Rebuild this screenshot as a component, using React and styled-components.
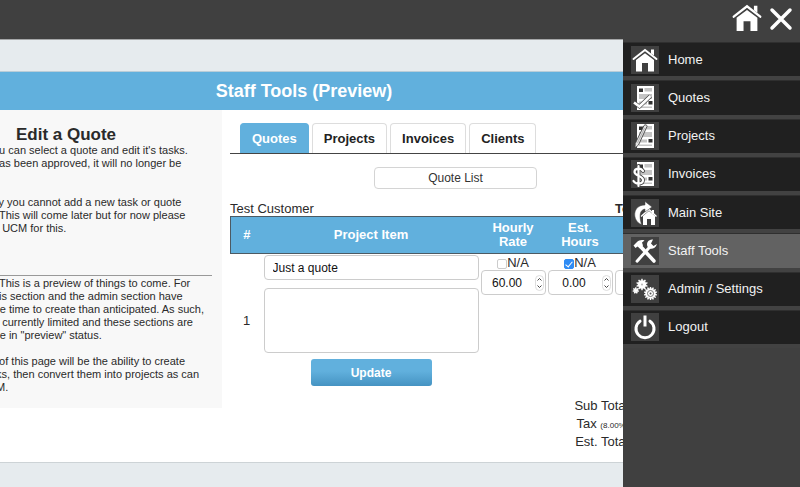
import React from 'react';
import styled, { createGlobalStyle, css } from 'styled-components';

const GlobalStyle = createGlobalStyle`
  *, *::before, *::after { box-sizing: border-box; }
  html, body { margin: 0; padding: 0; }
  body {
    min-height: 100vh;
    background: #e6ebee;
    color: #2a2a2a;
    font: 13px/18px "Liberation Sans", Arial, sans-serif;
    overflow: hidden;
  }
  button, input, textarea { font: inherit; }
`;

const blue = '#61b0dd';

const Shell = styled.div`
  overflow: hidden;
  min-height: 100vh;
`;

const TopBar = styled.div`
  height: 40px;
  background: #404040;
  border-bottom: 1px solid #a5a7a8;
`;

const Page = styled.main`
  width: 100%;
  margin: 31px 0 0 -96px;
  background: #fff;
  border-top: 1px solid #b9cdd8;
  border-bottom: 1px solid #cdd3d6;
`;

const PageTitle = styled.h1`
  margin: 0;
  height: 38px;
  background: ${blue};
  color: #fff;
  font-size: 18px;
  line-height: 38px;
  text-align: center;
`;

const Columns = styled.div`
  display: flex;
`;

const Help = styled.aside`
  flex: 0 0 318px;
  align-self: flex-start;
  background: #f8f8f8;
  padding: 16px 10px 1px 89px;
  font-size: 11px;
  line-height: 13px;
`;

const HelpTitle = styled.h2`
  margin: 0 0 0 -73px;
  font-size: 17px;
  line-height: 18px;
  text-align: center;
`;

const HelpText = styled.p`
  margin: 0 0 13px;
  white-space: pre;
`;

const HelpRule = styled.hr`
  margin: 40px 0 1px;
  border: 0;
  border-top: 1px solid #999;
`;

const Content = styled.section`
  flex: 1;
  min-width: 0;
  padding: 13px 23px 11px 8px;
`;

const Tabs = styled.nav`
  display: flex;
  gap: 3px;
  padding: 0 10px;
  border-bottom: 1px solid #444;
`;

const Tab = styled.a`
  height: 30px;
  padding: 0 11px;
  border: 1px solid #ddd;
  border-bottom: 0;
  border-radius: 4px 4px 0 0;
  color: #222;
  font-weight: bold;
  line-height: 29px;
  text-decoration: none;
  ${(p) => p.$active && css`
    background: ${blue};
    border-color: ${blue};
    color: #fff;
  `}
`;

const ListButton = styled.button`
  display: block;
  width: 163px;
  height: 22px;
  margin: 13px auto 11px;
  padding: 0;
  background: #fff;
  border: 1px solid #d4d4d4;
  border-radius: 4px;
  color: #333;
  font-size: 12px;
`;

const TableCaption = styled.div`
  display: flex;
  justify-content: space-between;
  height: 16px;
  padding-right: 36px;
`;

const QuoteTable = styled.table`
  width: 100%;
  table-layout: fixed;
  border-collapse: collapse;
`;

const HeadRow = styled.tr`
  height: 37px;
  background: ${blue};
  border: 1px solid #4c5a63;
  color: #fff;
  line-height: 14px;
`;

const HeadCell = styled.th`
  width: ${(p) => p.$width || 'auto'};
  padding: 0;
`;

const Cell = styled.td`
  padding: 1px;
  text-align: center;
  vertical-align: ${(p) => p.$align || 'top'};
`;

const field = css`
  display: block;
  width: 100%;
  background: #fff;
  border: 1px solid #ccc;
  border-radius: 4px;
  color: #111;
  font-size: 12px;
`;

const ItemInput = styled.input`
  ${field}
  height: 25px;
  padding: 0 8px;
`;

const ItemNotes = styled.textarea`
  ${field}
  height: 65px;
  margin-top: 8px;
  padding: 4px 8px;
  resize: none;
`;

const UpdateButton = styled.button`
  display: block;
  width: 121px;
  height: 27px;
  margin: 6px auto 0;
  padding: 0;
  border: 0;
  border-radius: 3px;
  background: linear-gradient(#61b0dd 45%, #4593c2);
  color: #fff;
  font-size: 12px;
  font-weight: bold;
`;

const NaLabel = styled.label`
  display: flex;
  align-items: center;
  justify-content: center;
  height: 15px;
`;

const CheckBox = styled.input`
  appearance: none;
  display: grid;
  place-items: center;
  width: 10px;
  height: 10px;
  margin: 2px 0 0;
  background: #fff;
  border: 1px solid #ccc;
  border-radius: 2px;
  &:checked { background: #2f8cf5; border-color: #2f8cf5; }
  &:checked::after {
    content: "";
    width: 4px;
    height: 7px;
    margin-bottom: 2px;
    border: solid #fff;
    border-width: 0 1px 1px 0;
    transform: rotate(40deg);
  }
`;

const NumberBox = styled.div`
  position: relative;
`;

const NumberInput = styled.input`
  ${field}
  height: 25px;
  padding: 0 20px 0 8px;
  text-align: center;
`;

const Spinner = styled.svg`
  position: absolute;
  top: 5px;
  right: 2px;
  pointer-events: none;
`;

const Totals = styled.dl`
  margin: 10px 0 0;
  padding-right: 49px;
  text-align: right;
`;

const TotalLabel = styled.dt`
  height: 18px;
  line-height: 18px;
`;

const Small = styled.small`
  font-size: 8px;
`;

const Drawer = styled.aside`
  position: fixed;
  inset: 0 0 0 auto;
  width: 177px;
  background: #404040;
`;

const DrawerTools = styled.div`
  display: flex;
  justify-content: flex-end;
  align-items: center;
  gap: 7px;
  height: 42px;
  padding: 0 7px 4px 0;
`;

const IconButton = styled.button`
  display: block;
  padding: 0;
  border: 0;
  background: none;
  svg { display: block; }
`;

const Menu = styled.nav`
  display: grid;
  grid-auto-rows: 1fr;
  height: 306px;
`;

const MenuLink = styled.a`
  display: flex;
  align-items: center;
  gap: 9px;
  padding: 0 8px;
  background: ${(p) => (p.$active ? '#626262' : '#202020')};
  border-top: 1px solid #2f2f2f;
  border-bottom: 4px solid #424242;
  color: #f2f2f2;
  text-decoration: none;
`;

const MenuIcon = styled.svg`
  flex: none;
  background: #404040;
`;

const HouseShape = () => (
  <g>
    <path d="M2.5 13 14 4 25.500 13" fill="none" stroke="#fff" strokeWidth="2" strokeLinecap="round" />
    <path d="M20 3.500h3v6l-3-2z" fill="#fff" />
    <path d="M5 14 14 7.200 23 14v11.500h-6v-8.500h-6v8.500H5z" fill="#fff" />
  </g>
);

const PaperShape = () => (
  <g>
    <path d="M6 2h17v24H6z" fill="#fff" />
    <path d="M13.500 4h7.500v3.500h-7.500zM8 10h13v5H8zM8 17.500h8v3H8zM8 22.500h13v1.500H8z" fill="#c4c4c4" />
    <path d="M8 4.500h4v3.500H8zM17.500 17h4v3.500h-4z" fill="#333" />
  </g>
);

const Gear = ({ x, y, r, teeth }) => (
  <g transform={`translate(${x} ${y})`}>
    <circle r={r} fill="#fff" />
    {Array.from({ length: teeth }, (_, i) => (
      <path
        key={i}
        d={`M-1 ${-r + 0.5}L-.6 ${-r - 1.6}H.6L1 ${-r + 0.5}z`}
        fill="#fff"
        transform={`rotate(${(360 / teeth) * i})`}
      />
    ))}
  </g>
);

const checkPath = 'm3 18.500 5.500 4L19.500 12';
const dollarPath = 'M12 11C10 7.500 3.500 8 3.500 12s8.500 3.500 8.500 8-7.500 4.500-9.500 1M7.500 6v20';

const icons = {
  home: <HouseShape />,
  quotes: (
    <g fill="none">
      <PaperShape />
      <path d={checkPath} stroke="#444" strokeWidth="4" />
      <path d={checkPath} stroke="#fff" strokeWidth="2.600" />
    </g>
  ),
  projects: (
    <g>
      <PaperShape />
      <path d="M13 3.500c1-1.500 3.500-.5 3 1L7.500 23l-3.500 3 .2-4.500z" fill="#e4e4e4" stroke="#444" strokeWidth=".9" />
      <path d="M13.500 6 6.500 21" stroke="#999" strokeWidth=".7" />
    </g>
  ),
  invoices: (
    <g fill="none" strokeLinecap="round">
      <PaperShape />
      <path d={dollarPath} stroke="#404040" strokeWidth="3.800" />
      <path d={dollarPath} stroke="#fff" strokeWidth="2.200" />
    </g>
  ),
  site: (
    <g>
      <path d="M12 17 18 12l6 5v9h-4v-6h-4v6h-4z" fill="#fff" />
      <path d="m10 17.500 8-7 7.500 7" fill="none" stroke="#fff" strokeWidth="1.500" />
      <path d="M22 11v4" stroke="#fff" strokeWidth="2" />
      <path d="M10.500 25.500C1 22 1 6 14 6V2.500L21 8l-7 5V10C8.500 11 8 17 10.500 25.500z" fill="#fff" stroke="#404040" strokeWidth=".5" />
    </g>
  ),
  tools: (
    <g fill="none" stroke="#fff">
      <path d="M9.500 9.500 23 24" strokeWidth="3.600" strokeLinecap="round" />
      <path d="m6 24.200 13-14.500" strokeWidth="3" strokeLinecap="round" />
      <path d="m2.500 8.500 3-3C8 3 11 2.500 13.500 3.500L11 5.500l1 3-3 3-2.500-2-2 1.500z" fill="#fff" stroke="none" />
      <path d="M22 2.500C17.500 2 15 6 16.500 9.500s7.500 3.500 9.500-2.500l-3.500 2-2.500-2.500z" fill="#fff" stroke="none" />
    </g>
  ),
  settings: (
    <g>
      <Gear x={11} y={9.5} r={4.2} teeth={10} />
      <Gear x={19.5} y={18.5} r={5} teeth={14} />
      <Gear x={4.8} y={15.5} r={1.6} teeth={7} />
      <circle cx="11" cy="9.500" r="1.100" fill="#bbb" />
      <circle cx="19.500" cy="18.500" r="3" fill="none" stroke="#777" />
      <circle cx="19.500" cy="18.500" r="1" fill="#555" />
    </g>
  ),
  logout: (
    <g fill="none" stroke="#fff" strokeWidth="3">
      <path d="M9 8.200a9 9 0 1 0 10 0" strokeLinecap="round" />
      <path d="M14 2.500v11" />
    </g>
  ),
};

const menu = [
  ['home', 'Home'],
  ['quotes', 'Quotes'],
  ['projects', 'Projects'],
  ['invoices', 'Invoices'],
  ['site', 'Main Site'],
  ['tools', 'Staff Tools'],
  ['settings', 'Admin / Settings'],
  ['logout', 'Logout'],
];

const help = [
  "ou can select a quote and edit it's tasks.\nhas been approved, it will no longer be\n ",
  ' ly you cannot add a new task or quote\n  This will come later but for now please\n   UCM for this.',
];

const notice = [
  '  This is a preview of things to come. For\nhis section and the admin section have\n re time to create than anticipated. As such,\n   currently limited and these sections are\n re in "preview" status.',
  '  of this page will be the ability to create\n ks, then convert them into projects as can\n M.',
];

function Amount({ label, value, na }) {
  return (
    <Cell>
      <NaLabel>
        <CheckBox type="checkbox" defaultChecked={na} />
        N/A
      </NaLabel>
      <NumberBox>
        <NumberInput type="text" inputMode="decimal" aria-label={label} defaultValue={value} />
        <Spinner width="9" height="16" viewBox="0 0 9 16">
          <rect x=".5" y=".5" width="8" height="15" rx="4" fill="#fff" stroke="#ddd" />
          <path d="m2.500 5.500 2-2 2 2M2.500 10.500l2 2 2-2" fill="none" stroke="#444" />
        </Spinner>
      </NumberBox>
    </Cell>
  );
}

export default function App() {
  return (
    <Shell>
      <GlobalStyle />
      <TopBar />
      <Page>
        <PageTitle>Staff Tools (Preview)</PageTitle>
        <Columns>
          <Help>
            <HelpTitle>Edit a Quote</HelpTitle>
            {help.map((t) => <HelpText key={t}>{t}</HelpText>)}
            <HelpRule />
            {notice.map((t) => <HelpText key={t}>{t}</HelpText>)}
          </Help>
          <Content>
            <Tabs>
              <Tab href="#quotes" $active>Quotes</Tab>
              <Tab href="#projects">Projects</Tab>
              <Tab href="#invoices">Invoices</Tab>
              <Tab href="#clients">Clients</Tab>
            </Tabs>
            <ListButton type="button">Quote List</ListButton>
            <TableCaption>
              <span>Test Customer</span>
              <b>Total</b>
            </TableCaption>
            <QuoteTable>
              <thead>
                <HeadRow>
                  <HeadCell $width="32px">#</HeadCell>
                  <HeadCell>Project Item</HeadCell>
                  <HeadCell $width="67px">Hourly<br />Rate</HeadCell>
                  <HeadCell $width="67px">Est.<br />Hours</HeadCell>
                  <HeadCell $width="67px" aria-label="Amount" />
                </HeadRow>
              </thead>
              <tbody>
                <tr>
                  <Cell $align="middle">1</Cell>
                  <Cell>
                    <ItemInput aria-label="Project item" defaultValue="Just a quote" />
                    <ItemNotes aria-label="Item notes" />
                    <UpdateButton type="button">Update</UpdateButton>
                  </Cell>
                  <Amount label="Hourly rate" value="60.00" />
                  <Amount label="Estimated hours" value="0.00" na />
                  <Amount label="Amount" value="" na />
                </tr>
              </tbody>
            </QuoteTable>
            <Totals>
              <TotalLabel>Sub Total:</TotalLabel>
              <TotalLabel>Tax <Small>(8.00%)</Small>:</TotalLabel>
              <TotalLabel>Est. Total:</TotalLabel>
            </Totals>
          </Content>
        </Columns>
      </Page>
      <Drawer>
        <DrawerTools>
          <IconButton type="button" aria-label="Home">
            <svg width="30" height="30" viewBox="1 2 26 26"><HouseShape /></svg>
          </IconButton>
          <IconButton type="button" aria-label="Close menu">
            <svg width="24" height="24" viewBox="0 0 24 24">
              <path d="m3 3 18 18M21 3 3 21" stroke="#fff" strokeWidth="3.500" strokeLinecap="round" />
            </svg>
          </IconButton>
        </DrawerTools>
        <Menu>
          {menu.map(([icon, label]) => (
            <MenuLink key={icon} href={`#${icon}`} $active={icon === 'tools'}>
              <MenuIcon width="28" height="28" viewBox="0 0 28 28">{icons[icon]}</MenuIcon>
              {label}
            </MenuLink>
          ))}
        </Menu>
      </Drawer>
    </Shell>
  );
}
